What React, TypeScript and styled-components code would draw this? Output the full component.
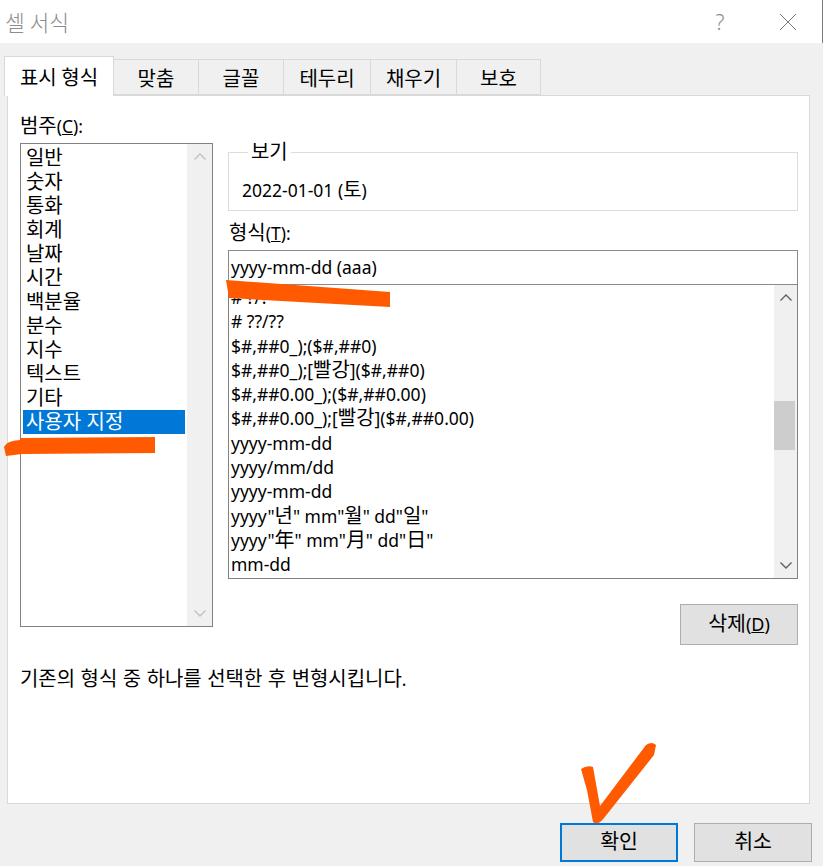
import React from "react";
import styled, { createGlobalStyle } from "styled-components";

const GlobalStyle = createGlobalStyle`
  html, body {
    margin: 0;
    padding: 0;
    background: #f0f0f0;
  }
  body {
    font-family: "Noto Sans", "Noto Sans CJK KR", sans-serif;
    font-size: 17.5px;
    color: #000;
  }
  * {
    box-sizing: border-box;
  }
`;

const categories = [
  "일반",
  "숫자",
  "통화",
  "회계",
  "날짜",
  "시간",
  "백분율",
  "분수",
  "지수",
  "텍스트",
  "기타",
  "사용자 지정",
];

const formats = [
  "# ?/?",
  "# ??/??",
  "$#,##0_);($#,##0)",
  "$#,##0_);[빨강]($#,##0)",
  "$#,##0.00_);($#,##0.00)",
  "$#,##0.00_);[빨강]($#,##0.00)",
  "yyyy-mm-dd",
  "yyyy/mm/dd",
  "yyyy-mm-dd",
  'yyyy"년" mm"월" dd"일"',
  'yyyy"年" mm"月" dd"日"',
  "mm-dd",
];

const tabs = [
  { label: "표시 형식", width: 110 },
  { label: "맞춤", width: 85 },
  { label: "글꼴", width: 85 },
  { label: "테두리", width: 87 },
  { label: "채우기", width: 86 },
  { label: "보호", width: 84 },
];

// hangul / kanji runs: bigger so they get the width of the original font,
// Liberation Sans first keeps the line box compact, glyphs come from Noto CJK
const Ko = styled.span`
  font-family: "Liberation Sans", "Noto Sans CJK KR", sans-serif;
  font-size: 1.14em;
  line-height: 1;
`;

function K({ text }: { text: string }) {
  const parts = text.split(/([\uAC00-\uD7A3\u4E00-\u9FFF]+(?: [\uAC00-\uD7A3]+)*)/);
  return (
    <>
      {parts.map((p, i) => (i % 2 === 1 ? <Ko key={i}>{p}</Ko> : p))}
    </>
  );
}

const Window = styled.div`
  position: relative;
  width: 823px;
  height: 866px;
  display: flex;
  flex-direction: column;
  background: #f0f0f0;
  overflow: hidden;
`;

const TitleBar = styled.div`
  height: 43px;
  flex-shrink: 0;
  display: flex;
  align-items: center;
  background: #fff;
  border-right: 1px solid #7a7a7a;
  padding-left: 5px;
`;

const Title = styled.div`
  flex: 1;
  font-family: "Noto Sans CJK KR", sans-serif;
  font-size: 21.5px;
  font-weight: 300;
  color: #8c8c8c;
`;

const TitleButton = styled.div`
  width: 68px;
  height: 43px;
  display: flex;
  align-items: center;
  justify-content: center;
  color: #8c8c8c;
  font-size: 21px;
  font-weight: 300;
  font-family: "Noto Sans", sans-serif;
`;

const TabRow = styled.div`
  display: flex;
  align-items: flex-end;
  margin-top: 12px;
  padding-left: 4px;
  height: 40px;
  position: relative;
  z-index: 1;
`;

const Tab = styled.div<{ $active?: boolean; $width: number }>`
  width: ${(p) => p.$width}px;
  height: ${(p) => (p.$active ? 40 : 36)}px;
  margin-bottom: ${(p) => (p.$active ? -1 : 0)}px;
  padding-bottom: ${(p) => (p.$active ? 1 : 0)}px;
  display: flex;
  align-items: center;
  justify-content: center;
  background: ${(p) => (p.$active ? "#fff" : "#f0f0f0")};
  border: 1px solid #d9d9d9;
  border-bottom: ${(p) => (p.$active ? "none" : "1px solid #d9d9d9")};
  border-left: ${(p) => (p.$active ? "1px solid #d9d9d9" : "none")};
  font-family: "Noto Sans CJK KR", sans-serif;
  font-size: 20px;
`;

const Panel = styled.div`
  margin-left: 7px;
  width: 803px;
  height: 709px;
  background: #fff;
  border: 1px solid #d9d9d9;
  padding: 18px 11px 0 12px;
  display: flex;
  flex-direction: column;
`;

const Columns = styled.div`
  display: grid;
  grid-template-columns: 193px 570px;
  column-gap: 15px;
  align-items: start;
`;

const Column = styled.div`
  display: flex;
  flex-direction: column;
`;

const Label = styled.div<{ $indent?: number; $top?: number }>`
  line-height: 24px;
  height: 24px;
  padding-left: ${(p) => p.$indent ?? 0}px;
  margin-top: ${(p) => p.$top ?? 0}px;
  white-space: nowrap;
`;

const CategoryBox = styled.div`
  margin-top: 5px;
  height: 484px;
  border: 1px solid #828282;
  display: flex;
`;

const CategoryItems = styled.div`
  flex: 1;
  padding: 2px 2px 0 2px;
`;

const Item = styled.div<{ $selected?: boolean; $pad: number; $height: number }>`
  height: ${(p) => p.$height}px;
  line-height: ${(p) => p.$height}px;
  padding-left: ${(p) => p.$pad}px;
  white-space: nowrap;
  background: ${(p) => (p.$selected ? "#0078d7" : "transparent")};
  color: ${(p) => (p.$selected ? "#fff" : "#000")};
`;

const ScrollBar = styled.div<{ $width: number }>`
  width: ${(p) => p.$width}px;
  flex-shrink: 0;
  background: #f0f0f0;
  display: flex;
  flex-direction: column;
`;

const ScrollButton = styled.div`
  height: 25px;
  display: flex;
  align-items: center;
  justify-content: center;
`;

const ScrollTrack = styled.div`
  flex: 1;
`;

const Thumb = styled.div`
  margin: 91px 0 0 0;
  width: 21px;
  height: 49px;
  background: #cdcdcd;
`;

const Preview = styled.fieldset`
  margin: 28px 0 0 0;
  padding: 15px 13px 8px;
  border: 1px solid #dcdcdc;
  min-width: 0;
`;

const Legend = styled.legend`
  margin-left: 6px;
  padding: 0 3px;
  line-height: 20px;
`;

const PreviewText = styled.div`
  line-height: 24px;
`;

const FormatInput = styled.div`
  margin-top: 5px;
  height: 35px;
  border: 1px solid #8a8a8a;
  padding-left: 2px;
  line-height: 33px;
`;

const FormatBox = styled.div`
  height: 294px;
  border: 1px solid #828282;
  border-top: none;
  display: flex;
`;

const FormatItems = styled.div`
  flex: 1;
  overflow: hidden;
`;

const Button = styled.div<{ $default?: boolean }>`
  width: 118px;
  height: 39px;
  display: flex;
  align-items: center;
  justify-content: center;
  background: #e1e1e1;
  border: ${(p) => (p.$default ? "2px solid #0078d7" : "1px solid #adadad")};
  font-size: 18px;
`;

const DeleteButton = styled(Button)`
  align-self: flex-end;
  margin-top: 25px;
  height: 41px;
`;

const Description = styled.div`
  margin-top: 22px;
  line-height: 24px;
  white-space: nowrap;
`;

const Footer = styled.div`
  display: flex;
  justify-content: flex-end;
  gap: 16px;
  padding: 19px 11px 0 0;
`;

const Marks = styled.svg`
  position: absolute;
  left: 0;
  top: 0;
  pointer-events: none;
`;

function Chevron({ up, color }: { up?: boolean; color: string }) {
  return (
    <svg width="14" height="9" viewBox="0 0 14 9">
      <polyline
        points={up ? "1.5,7.5 7,2 12.5,7.5" : "1.5,1.5 7,7 12.5,1.5"}
        fill="none"
        stroke={color}
        strokeWidth="1.4"
      />
    </svg>
  );
}

function CloseIcon() {
  return (
    <svg width="18" height="18" viewBox="0 0 18 18">
      <path d="M1 1 L17 17 M17 1 L1 17" stroke="#7a7a7a" strokeWidth="1" />
    </svg>
  );
}

export default function App() {
  return (
    <>
      <GlobalStyle />
      <Window>
        <TitleBar>
          <Title>셀 서식</Title>
          <TitleButton>?</TitleButton>
          <TitleButton>
            <CloseIcon />
          </TitleButton>
        </TitleBar>

        <TabRow>
          {tabs.map((t, i) => (
            <Tab key={t.label} $active={i === 0} $width={t.width}>
              {t.label}
            </Tab>
          ))}
        </TabRow>

        <Panel>
          <Columns>
            <Column>
              <Label>
                <Ko>범주</Ko>(<u>C</u>):
              </Label>
              <CategoryBox>
                <CategoryItems>
                  {categories.map((c) => (
                    <Item key={c} $pad={3} $height={24} $selected={c === "사용자 지정"}>
                      <K text={c} />
                    </Item>
                  ))}
                </CategoryItems>
                <ScrollBar $width={25}>
                  <ScrollButton>
                    <Chevron up color="#c2c2c2" />
                  </ScrollButton>
                  <ScrollTrack />
                  <ScrollButton>
                    <Chevron color="#c2c2c2" />
                  </ScrollButton>
                </ScrollBar>
              </CategoryBox>
            </Column>

            <Column>
              <Preview>
                <Legend>
                  <Ko>보기</Ko>
                </Legend>
                <PreviewText>
                  2022-01-01 (<Ko>토</Ko>)
                </PreviewText>
              </Preview>
              <Label $indent={1} $top={10}>
                <Ko>형식</Ko>(<u>T</u>):
              </Label>
              <FormatInput>yyyy-mm-dd (aaa)</FormatInput>
              <FormatBox>
                <FormatItems>
                  {formats.map((f, i) => (
                    <Item key={i} $pad={2} $height={24.3}>
                      <K text={f} />
                    </Item>
                  ))}
                </FormatItems>
                <ScrollBar $width={23}>
                  <ScrollButton>
                    <Chevron up color="#606060" />
                  </ScrollButton>
                  <ScrollTrack>
                    <Thumb />
                  </ScrollTrack>
                  <ScrollButton>
                    <Chevron color="#606060" />
                  </ScrollButton>
                </ScrollBar>
              </FormatBox>
              <DeleteButton>
                <Ko>삭제</Ko>(<u>D</u>)
              </DeleteButton>
            </Column>
          </Columns>
          <Description>
            <K text="기존의 형식 중 하나를 선택한 후 변형시킵니다" />.
          </Description>
        </Panel>

        <Footer>
          <Button $default>
            <Ko>확인</Ko>
          </Button>
          <Button>
            <Ko>취소</Ko>
          </Button>
        </Footer>

        <Marks width="823" height="866" viewBox="0 0 823 866">
          <path
            d="M20 438 L155 437 L155 453 L22 454 L6 456 L4 447 Q6 441 20 440 Z"
            fill="#ff5a00"
          />
          <path d="M226 280 L390 292 L390 307 L229 298 Z" fill="#ff5a00" />
          <path
            d="M581 769 Q587 765 593 767 L600 806 L646 745 Q652 741 656 745 L654 755 L604 818 Q598 826 593 822 L587 790 Z"
            fill="#ff5a00"
          />
        </Marks>
      </Window>
    </>
  );
}
